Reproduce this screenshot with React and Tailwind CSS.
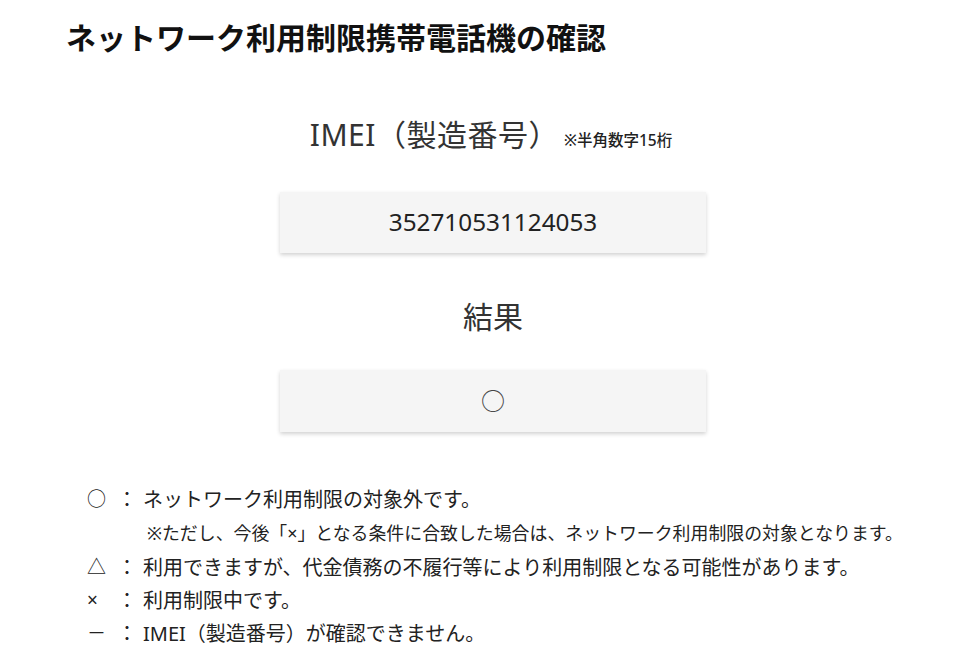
import React from "react"

const font = { fontFamily: '"Noto Sans", "Noto Sans CJK JP", sans-serif' }

const legend = [
  { mark: "○", text: "ネットワーク利用制限の対象外です。", note: "※ただし、今後「×」となる条件に合致した場合は、ネットワーク利用制限の対象となります。" },
  { mark: "△", text: "利用できますが、代金債務の不履行等により利用制限となる可能性があります。" },
  { mark: "×", text: "利用制限中です。" },
  { mark: "－", text: "IMEI（製造番号）が確認できません。" },
]

export default function App() {
  return (
    <div className="w-[980px] h-[659px] bg-white text-[#333] overflow-hidden" style={font}>
      <h1 className="pl-[66px] pt-[18px] text-[30px] leading-[40px] font-bold text-[#111]">
        ネットワーク利用制限携帯電話機の確認
      </h1>

      <div className="flex flex-col items-center pl-[6px]">
        <div className="mt-[57px] flex items-end gap-[5px] mr-[4px]">
          <span className="text-[30px] leading-[40px] tracking-[0.5px]">IMEI（製造番号）</span>
          <span className="text-[15.5px] leading-[30px] font-medium text-[#222]">※半角数字15桁</span>
        </div>

        <div className="mt-[37px] w-[426px] h-[61px] bg-[#f5f5f5] shadow-[0_2px_4px_rgba(0,0,0,0.18)] flex items-center justify-center">
          <span className="text-[24.3px] text-[#222]" style={{ fontFamily: '"Noto Sans", sans-serif' }}>352710531124053</span>
        </div>

        <div className="mt-[44px] text-[30px] leading-[40px]">結果</div>

        <div className="mt-[33px] w-[426px] h-[62px] bg-[#f5f5f5] shadow-[0_2px_4px_rgba(0,0,0,0.18)] flex items-center justify-center">
          <span className="text-[24px] text-[#444]">○</span>
        </div>
      </div>

      <div className="mt-[51px] pl-[87px] flex flex-col">
        {legend.map((row) => (
          <div key={row.mark} className="flex flex-col">
            <div className="flex items-center text-[20px] leading-[33px] text-[#222]">
              <span className="w-[30px] text-[19px]">{row.mark}</span>
              <span className="w-[26px]">：</span>
              <span>{row.text}</span>
            </div>
            {row.note && (
              <div className="pl-[60px] text-[17.9px] leading-[35px] text-[#222]">{row.note}</div>
            )}
          </div>
        ))}
      </div>
    </div>
  )
}
